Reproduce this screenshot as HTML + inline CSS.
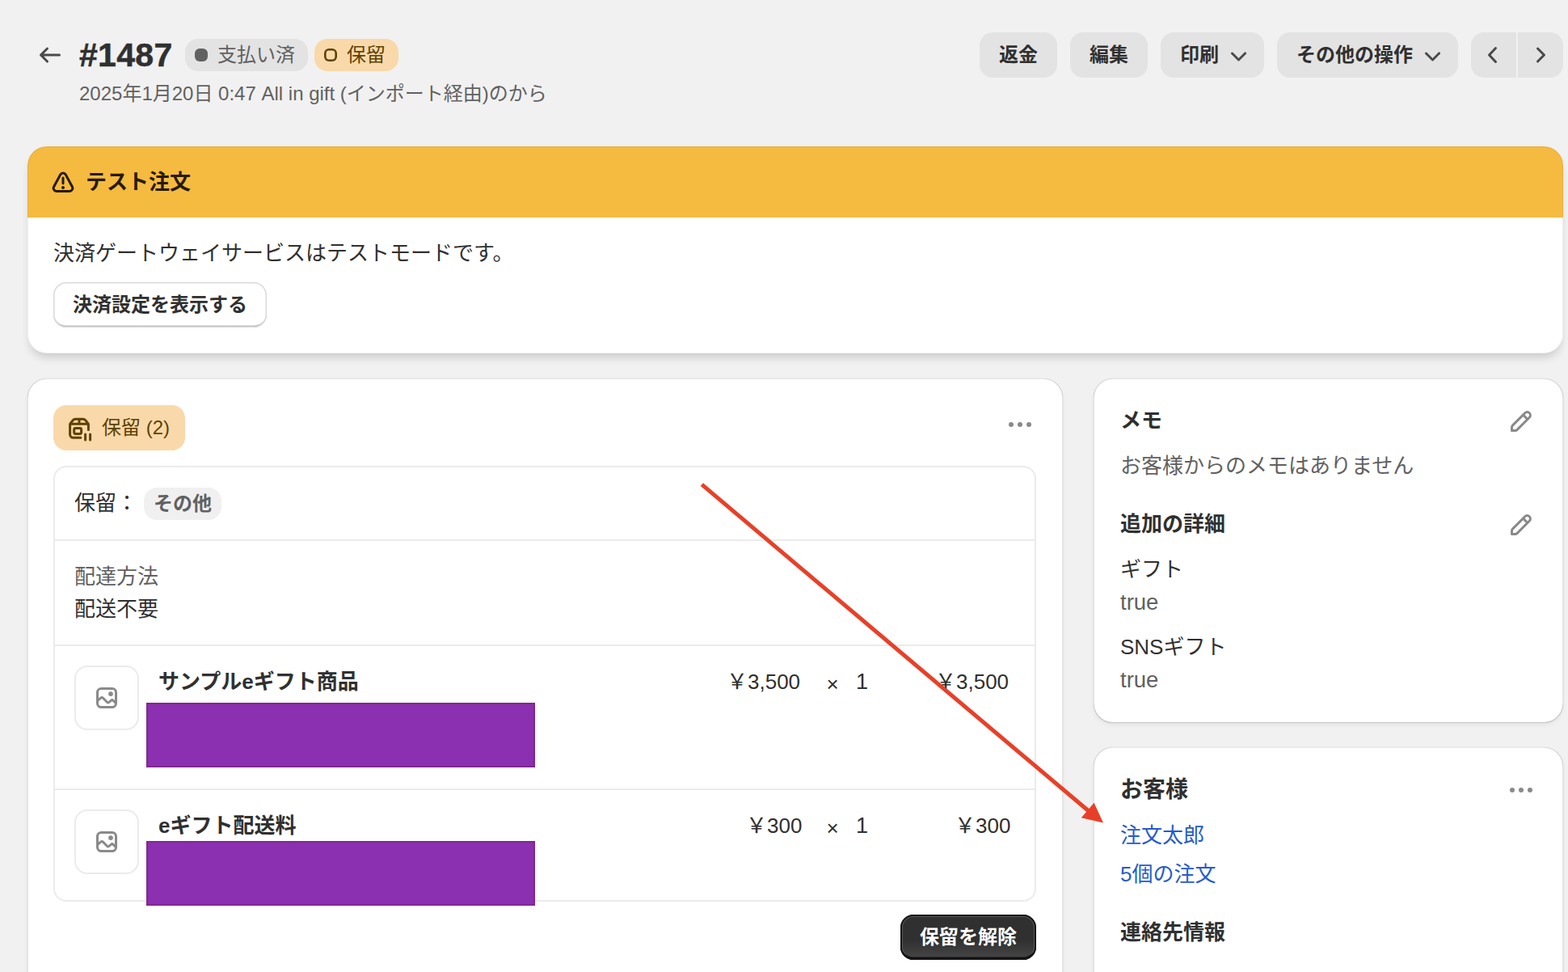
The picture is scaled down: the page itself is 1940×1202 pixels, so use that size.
<!DOCTYPE html>
<html lang="ja">
<head>
<meta charset="utf-8">
<title>#1487 · 注文</title>
<style>
*{box-sizing:border-box;margin:0;padding:0}
html,body{width:1940px;height:1202px;overflow:hidden}
body{position:relative;background:#f1f1f1;color:#303030;font-family:"Liberation Sans","Noto Sans CJK JP",sans-serif;font-size:26px;line-height:40px}
.abs{position:absolute}
.ic{position:absolute;display:block;color:inherit}
.ic [stroke="currentColor"]{stroke:currentColor}
/* text runs: fixed-size box, real text positioned inside */
.tx{position:relative;display:inline-block;vertical-align:top;white-space:nowrap}
.tx>.rt{position:absolute;left:0;top:0;white-space:nowrap;font-family:"Liberation Sans","Noto Sans CJK JP",sans-serif}
.lat{display:block;white-space:nowrap}
h1,h2,h3{font-weight:inherit;font-size:inherit}
a{color:inherit;text-decoration:none}
button{font:inherit;color:inherit;border:0;background:none;display:block;text-align:left}

.btn{position:absolute;top:40px;height:56px;border-radius:16px;background:#e3e3e3;padding:12px 24px}
.badge{position:absolute;height:40px;border-radius:16px;top:48px}
.badge .pip{position:absolute;left:12px;top:12px;width:16px;height:16px;border-radius:6px}
.badge .tx{position:absolute;top:4px}
.card{position:absolute;background:#fff;border-radius:24px;
  box-shadow:inset 1px 0 0 rgba(0,0,0,.11),inset -1px 0 0 rgba(0,0,0,.11),inset 0 1px 0 rgba(0,0,0,.09),inset 0 -1px 0 rgba(0,0,0,.2),0 0 0 .6px rgba(0,0,0,.05),0 3px 6px -1px rgba(26,26,26,.07)}
.row{position:absolute;left:0;right:0}
.hr{position:absolute;left:0;right:0;height:2px;background:#ebebeb}
.thumb{position:absolute;left:24px;width:80px;height:80px;border:2px solid #ebebeb;border-radius:16px;background:#fff;color:#8a8a8a}
.mask{position:absolute;left:180.5px;width:481.7px;height:80.3px;background:#8c30b2;box-shadow:inset 0 0 0 1px #7e2388,inset 0 0 0 2.5px rgba(126,35,136,.5)}
</style>
</head>
<body>
<header><a class="abs" style="left:42px;top:48px;width:40px;height:40px;color:#4a4a4a" aria-label="戻る"><svg class="ic " style="left:0px;top:0px;" width="40" height="40" viewBox="0 0 20 20" fill="currentColor" aria-hidden="true"><path fill-rule="evenodd" d="M16.5 10a.75.75 0 0 1-.75.75h-9.69l2.72 2.72a.75.75 0 1 1-1.06 1.06l-4-4a.75.75 0 0 1 0-1.06l4-4a.75.75 0 0 1 1.06 1.06l-2.72 2.72h9.69a.75.75 0 0 1 .75.75Z"/></svg></a><h1 class="abs lat" style="left:98px;top:44px;font-size:41px;line-height:48px;font-weight:bold;letter-spacing:.3px;-webkit-text-stroke:.5px #303030">#1487</h1><div class="badge" style="left:229px;width:152px;background:#e3e3e3"><span class="pip" style="background:#616161"></span><span class="tx " style="width:96px;height:32px;left:40px"><span class="rt" style="font-size:24px;line-height:32px;color:#616161">支払い済</span></span></div><div class="badge" style="left:389px;width:104px;background:#f9d9aa"><span class="pip" style="box-shadow:inset 0 0 0 2.6px #5e4200"></span><span class="tx " style="width:48px;height:32px;left:40px"><span class="rt" style="font-size:24px;line-height:32px;color:#5e4200">保留</span></span></div><p class="abs" style="left:98px;top:100px;height:32px"><span class="tx " style="width:599px;height:32px;"><span class="rt" style="font-size:24px;line-height:32px;color:#616161">2025年1月20日 0:47 All in gift (インポート経由)のから</span></span></p><nav aria-label="操作"><button class="btn" style="left:1212px;width:96px"><span class="tx " style="width:48px;height:32px;"><span class="rt" style="font-size:24px;line-height:32px;color:#303030;font-weight:600">返金</span></span></button><button class="btn" style="left:1324px;width:96px"><span class="tx " style="width:48px;height:32px;"><span class="rt" style="font-size:24px;line-height:32px;color:#303030;font-weight:600">編集</span></span></button><button class="btn" style="left:1436px;width:128px"><span class="tx " style="width:48px;height:32px;"><span class="rt" style="font-size:24px;line-height:32px;color:#303030;font-weight:600">印刷</span></span><svg class="ic " style="left:76px;top:8px;" width="40" height="40" viewBox="0 0 20 20" fill="#4a4a4a" aria-hidden="true"><path fill-rule="evenodd" d="M5.72 8.47a.75.75 0 0 1 1.06 0l3.47 3.47 3.47-3.47a.75.75 0 1 1 1.06 1.06l-4 4a.75.75 0 0 1-1.06 0l-4-4a.75.75 0 0 1 0-1.06Z"/></svg></button><button class="btn" style="left:1580px;width:224px"><span class="tx " style="width:144px;height:32px;"><span class="rt" style="font-size:24px;line-height:32px;color:#303030;font-weight:600">その他の操作</span></span><svg class="ic " style="left:172px;top:8px;" width="40" height="40" viewBox="0 0 20 20" fill="#4a4a4a" aria-hidden="true"><path fill-rule="evenodd" d="M5.72 8.47a.75.75 0 0 1 1.06 0l3.47 3.47 3.47-3.47a.75.75 0 1 1 1.06 1.06l-4 4a.75.75 0 0 1-1.06 0l-4-4a.75.75 0 0 1 0-1.06Z"/></svg></button><button class="btn" style="left:1820px;width:56px;border-radius:16px 0 0 16px;padding:0" aria-label="前へ"><svg class="ic " style="left:8px;top:8px;" width="40" height="40" viewBox="0 0 20 20" fill="#4a4a4a" aria-hidden="true"><path fill-rule="evenodd" d="M11.764 5.204a.75.75 0 0 1 .032 1.06l-3.516 3.736 3.516 3.736a.75.75 0 1 1-1.092 1.028l-4-4.25a.75.75 0 0 1 0-1.028l4-4.25a.75.75 0 0 1 1.06-.032Z"/></svg></button><button class="btn" style="left:1878px;width:56px;border-radius:0 16px 16px 0;padding:0" aria-label="次へ"><svg class="ic " style="left:8px;top:8px;" width="40" height="40" viewBox="0 0 20 20" fill="#4a4a4a" aria-hidden="true"><path fill-rule="evenodd" d="M7.72 14.53a.75.75 0 0 1 0-1.06l3.47-3.47-3.47-3.47a.75.75 0 0 1 1.06-1.06l4 4a.75.75 0 0 1 0 1.06l-4 4a.75.75 0 0 1-1.06 0Z"/></svg></button></nav></header>
<section class="abs" style="left:34px;top:181px;width:1900px;height:256px;border-radius:24px;background:#fff;overflow:hidden;box-shadow:none">
<div style="position:absolute;left:0;top:0;right:0;height:88px;background:#f5ba40;color:#251a00"><svg class="ic " style="left:24px;top:24px;" width="40" height="40" viewBox="0 0 20 20" fill="currentColor" aria-hidden="true"><path d="M8.37 5.44A1.85 1.85 0 0 1 11.63 5.44L15.71 12.97A1.85 1.85 0 0 1 14.09 15.7L5.91 15.7A1.85 1.85 0 0 1 4.29 12.97Z" fill="none" stroke="currentColor" stroke-width="1.5"/><path d="M10 7.5v3.4" fill="none" stroke="currentColor" stroke-width="1.5" stroke-linecap="round"/><circle cx="10" cy="13.5" r="1"/></svg>
<h2 class="abs" style="left:72px;top:24px"><span class="tx " style="width:130px;height:40px;"><span class="rt" style="font-size:26px;line-height:40px;color:#251a00;font-weight:bold">テスト注文</span></span></h2></div>
<p class="abs" style="left:32px;top:112px"><span class="tx " style="width:572px;height:40px;"><span class="rt" style="font-size:26px;line-height:40px;color:#303030">決済ゲートウェイサービスはテストモードです。</span></span></p>
<button class="abs" style="left:32px;top:168px;width:264px;height:56px;border-radius:16px;background:#fff;padding:12px 24px;box-shadow:inset 0 0 0 1.5px #d9d9d9,inset 0 -3px 0 -0.5px #b5b5b5"><span class="tx " style="width:216px;height:32px;"><span class="rt" style="font-size:24px;line-height:32px;color:#303030;font-weight:600">決済設定を表示する</span></span></button>
</section>
<div class="abs" style="left:34px;top:181px;width:1900px;height:256px;border-radius:24px;pointer-events:none;box-shadow:0 8px 12px -4px rgba(26,26,26,.2),inset 0 0 0 1px rgba(0,0,0,.06)"></div>
<main class="card" style="left:34px;top:468px;width:1281px;height:800px">
<div class="abs" style="left:32px;top:33px;width:163px;height:56px;border-radius:16px;background:#f9d9aa;color:#5e4200"><svg class="ic " style="left:12px;top:7.5px;" width="40" height="40" viewBox="0 0 20 20" fill="currentColor" aria-hidden="true"><g fill="none" stroke="currentColor" stroke-width="1.5" stroke-linecap="round" stroke-linejoin="round"><path d="M10.9 16.15H6.3a2 2 0 0 1-2-2V8.3c0-.45.15-.9.43-1.25L6.1 5.35a2 2 0 0 1 1.55-.73h4.7a2 2 0 0 1 1.55.73l1.37 1.7c.28.35.43.8.43 1.25v2.95"/><path d="M4.5 7.6h11M10 4.7v2.9"/><rect x="6.85" y="10.3" width="4.45" height="3.4" rx=".8"/><path d="M13.8 13.95v3.6M16.8 13.95v3.6"/></g></svg><span class="abs" style="left:60px;top:12px"><span class="tx " style="width:87px;height:32px;"><span class="rt" style="font-size:24px;line-height:32px;color:#5e4200">保留 (2)</span></span></span></div>
<button class="abs" style="left:1208px;top:37px;width:40px;height:40px;color:#8a8a8a" aria-label="その他"><svg class="ic " style="left:0px;top:0px;" width="40" height="40" viewBox="0 0 20 20" fill="currentColor" aria-hidden="true"><circle cx="4.5" cy="10" r="1.5"/><circle cx="10" cy="10" r="1.5"/><circle cx="15.5" cy="10" r="1.5"/></svg></button>
<div class="abs" style="left:32px;top:108px;width:1216px;height:539px;border:2px solid #ebebeb;border-radius:16px">
 <div class="row" style="top:0;height:89px"><span class="abs" style="left:24px;top:24px"><span class="tx " style="width:78px;height:40px;"><span class="rt" style="font-size:26px;line-height:40px;color:#303030">保留：</span></span></span>
  <span class="abs" style="left:110px;top:25px;width:96px;height:40px;border-radius:16px;background:#f0f0f0"><span class="tx " style="width:72px;height:32px;position:absolute;left:12px;top:4px"><span class="rt" style="font-size:24px;line-height:32px;color:#616161;font-weight:600">その他</span></span></span></div>
 <div class="hr" style="top:89px"></div>
 <div class="row" style="top:91px;height:128px"><p class="abs" style="left:24px;top:24px"><span class="tx " style="width:104px;height:40px;"><span class="rt" style="font-size:26px;line-height:40px;color:#616161">配達方法</span></span></p><p class="abs" style="left:24px;top:64px"><span class="tx " style="width:104px;height:40px;"><span class="rt" style="font-size:26px;line-height:40px;color:#303030">配送不要</span></span></p></div>
 <div class="hr" style="top:219px"></div>
 <div class="row" style="top:221px;height:176px"><div class="thumb" style="top:24px"><svg class="ic " style="left:18px;top:18px;" width="40" height="40" viewBox="0 0 20 20" fill="currentColor" aria-hidden="true"><rect x="4.25" y="4.25" width="11.5" height="11.5" rx="2.4" fill="none" stroke="currentColor" stroke-width="1.5"/><circle cx="12.5" cy="7.55" r="1.45"/><path d="M4.6 11.5 6.35 10.05a1 1 0 0 1 1.33.05l2.55 2.5a1 1 0 0 0 1.38.02l1.05-.98a1 1 0 0 1 1.38.02l1.6 1.6" fill="none" stroke="currentColor" stroke-width="1.5" stroke-linecap="round" stroke-linejoin="round"/></svg></div>
  <h3 class="abs" style="left:128px;top:24px"><span class="tx " style="width:250px;height:40px;"><span class="rt" style="font-size:26px;line-height:40px;color:#303030;font-weight:bold">サンプルeギフト商品</span></span></h3><div class="abs" style="right:282px;top:24px"><span class="tx " style="width:99px;height:40px;"><span class="rt" style="font-size:26px;line-height:40px;color:#303030">￥3,500</span></span></div><div class="abs lat" style="left:952px;top:26.5px;width:20px;text-align:center;font-size:26px;line-height:40px">×</div><div class="abs lat" style="right:206px;top:24px;font-size:27px;line-height:40px">1</div><div class="abs" style="right:24px;top:24px"><span class="tx " style="width:99px;height:40px;"><span class="rt" style="font-size:26px;line-height:40px;color:#303030">￥3,500</span></span></div></div>
 <div class="hr" style="top:397px"></div>
 <div class="row" style="top:399px;height:136px"><div class="thumb" style="top:24px"><svg class="ic " style="left:18px;top:18px;" width="40" height="40" viewBox="0 0 20 20" fill="currentColor" aria-hidden="true"><rect x="4.25" y="4.25" width="11.5" height="11.5" rx="2.4" fill="none" stroke="currentColor" stroke-width="1.5"/><circle cx="12.5" cy="7.55" r="1.45"/><path d="M4.6 11.5 6.35 10.05a1 1 0 0 1 1.33.05l2.55 2.5a1 1 0 0 0 1.38.02l1.05-.98a1 1 0 0 1 1.38.02l1.6 1.6" fill="none" stroke="currentColor" stroke-width="1.5" stroke-linecap="round" stroke-linejoin="round"/></svg></div>
  <h3 class="abs" style="left:128px;top:24px"><span class="tx " style="width:172px;height:40px;"><span class="rt" style="font-size:26px;line-height:40px;color:#303030;font-weight:bold">eギフト配送料</span></span></h3><div class="abs" style="right:282px;top:24px"><span class="tx " style="width:75px;height:40px;"><span class="rt" style="font-size:26px;line-height:40px;color:#303030">￥300</span></span></div><div class="abs lat" style="left:952px;top:26.5px;width:20px;text-align:center;font-size:26px;line-height:40px">×</div><div class="abs lat" style="right:206px;top:24px;font-size:27px;line-height:40px">1</div><div class="abs" style="right:24px;top:24px"><span class="tx " style="width:75px;height:40px;"><span class="rt" style="font-size:26px;line-height:40px;color:#303030">￥300</span></span></div></div>
</div>
<button class="abs" style="left:1080px;top:663px;width:168px;height:56px;border-radius:16px;padding:12px 24px;background:linear-gradient(180deg,#303030 0%,#303030 55%,#474747 100%);box-shadow:inset 0 0 0 2px #151515,inset 0 -3.5px 0 0 #121212,inset 0 0 0 3px rgba(255,255,255,.18)"><span class="tx " style="width:120px;height:32px;"><span class="rt" style="font-size:24px;line-height:32px;color:#ffffff;font-weight:bold">保留を解除</span></span></button>
</main>
<div class="mask" style="top:869px"></div>
<div class="mask" style="top:1040px"></div>
<aside>
<section class="card" style="left:1353px;top:468px;width:581px;height:426px">
 <h2 class="abs" style="left:33px;top:32px"><span class="tx " style="width:52px;height:40px;"><span class="rt" style="font-size:26px;line-height:40px;color:#303030;font-weight:bold">メモ</span></span></h2>
 <button class="abs" style="left:509px;top:33px;width:40px;height:40px;color:#8a8a8a" aria-label="編集"><svg class="ic " style="left:0px;top:0px;" width="40" height="40" viewBox="0 0 20 20" fill="currentColor" aria-hidden="true"><path fill-rule="evenodd" d="M15.655 4.344a2.695 2.695 0 0 0-3.81 0l-.599.599-.009-.009-1.06 1.06.008.01-5.88 5.88a2.75 2.75 0 0 0-.805 1.944v1.922a.75.75 0 0 0 .75.75h1.922a2.75 2.75 0 0 0 1.944-.806l7.54-7.539a2.695 2.695 0 0 0 0-3.81Zm-4.409 2.72-5.88 5.88a1.25 1.25 0 0 0-.366.884v1.172h1.172c.331 0 .65-.132.883-.366l5.88-5.88-1.689-1.69Zm2.75.629.599-.599a1.195 1.195 0 1 0-1.69-1.689l-.598.599 1.69 1.689Z"/></svg></button>
 <p class="abs" style="left:33px;top:88px"><span class="tx " style="width:364px;height:40px;"><span class="rt" style="font-size:26px;line-height:40px;color:#616161">お客様からのメモはありません</span></span></p>
 <h3 class="abs" style="left:33px;top:160px"><span class="tx " style="width:130px;height:40px;"><span class="rt" style="font-size:26px;line-height:40px;color:#303030;font-weight:bold">追加の詳細</span></span></h3>
 <button class="abs" style="left:509px;top:161px;width:40px;height:40px;color:#8a8a8a" aria-label="編集"><svg class="ic " style="left:0px;top:0px;" width="40" height="40" viewBox="0 0 20 20" fill="currentColor" aria-hidden="true"><path fill-rule="evenodd" d="M15.655 4.344a2.695 2.695 0 0 0-3.81 0l-.599.599-.009-.009-1.06 1.06.008.01-5.88 5.88a2.75 2.75 0 0 0-.805 1.944v1.922a.75.75 0 0 0 .75.75h1.922a2.75 2.75 0 0 0 1.944-.806l7.54-7.539a2.695 2.695 0 0 0 0-3.81Zm-4.409 2.72-5.88 5.88a1.25 1.25 0 0 0-.366.884v1.172h1.172c.331 0 .65-.132.883-.366l5.88-5.88-1.689-1.69Zm2.75.629.599-.599a1.195 1.195 0 1 0-1.69-1.689l-.598.599 1.69 1.689Z"/></svg></button>
 <p class="abs" style="left:33px;top:216px"><span class="tx " style="width:78px;height:40px;"><span class="rt" style="font-size:26px;line-height:40px;color:#303030">ギフト</span></span></p>
 <p class="abs lat" style="left:33px;top:257px;font-size:27.5px;line-height:40px;color:#616161">true</p>
 <p class="abs" style="left:33px;top:312px"><span class="tx " style="width:131px;height:40px;"><span class="rt" style="font-size:26px;line-height:40px;color:#303030">SNSギフト</span></span></p>
 <p class="abs lat" style="left:33px;top:353px;font-size:27.5px;line-height:40px;color:#616161">true</p>
</section>
<section class="card" style="left:1353px;top:924px;width:581px;height:400px">
 <h2 class="abs" style="left:33px;top:33px"><span class="tx " style="width:84px;height:40px;"><span class="rt" style="font-size:28px;line-height:40px;color:#303030;font-weight:bold">お客様</span></span></h2>
 <button class="abs" style="left:509px;top:33px;width:40px;height:40px;color:#8a8a8a" aria-label="その他"><svg class="ic " style="left:0px;top:0px;" width="40" height="40" viewBox="0 0 20 20" fill="currentColor" aria-hidden="true"><circle cx="4.5" cy="10" r="1.5"/><circle cx="10" cy="10" r="1.5"/><circle cx="15.5" cy="10" r="1.5"/></svg></button>
 <a class="abs" style="left:33px;top:89px"><span class="tx " style="width:104px;height:40px;"><span class="rt" style="font-size:26px;line-height:40px;color:#255bce">注文太郎</span></span></a>
 <a class="abs" style="left:33px;top:137px"><span class="tx " style="width:120px;height:40px;"><span class="rt" style="font-size:26px;line-height:40px;color:#255bce">5個の注文</span></span></a>
 <h3 class="abs" style="left:33px;top:209px"><span class="tx " style="width:130px;height:40px;"><span class="rt" style="font-size:26px;line-height:40px;color:#303030;font-weight:bold">連絡先情報</span></span></h3>
</section>
</aside>
<svg class="abs" style="left:0;top:0;pointer-events:none" width="1940" height="1202" viewBox="0 0 1940 1202" aria-hidden="true">
<path d="M868.3 599.1 1347 1003" stroke="#e84028" stroke-width="5" fill="none"/>
<path d="M1365 1017.6 1353.6 992.8 1337.8 1011.2Z" fill="#e84028"/>
</svg>
</body>
</html>
